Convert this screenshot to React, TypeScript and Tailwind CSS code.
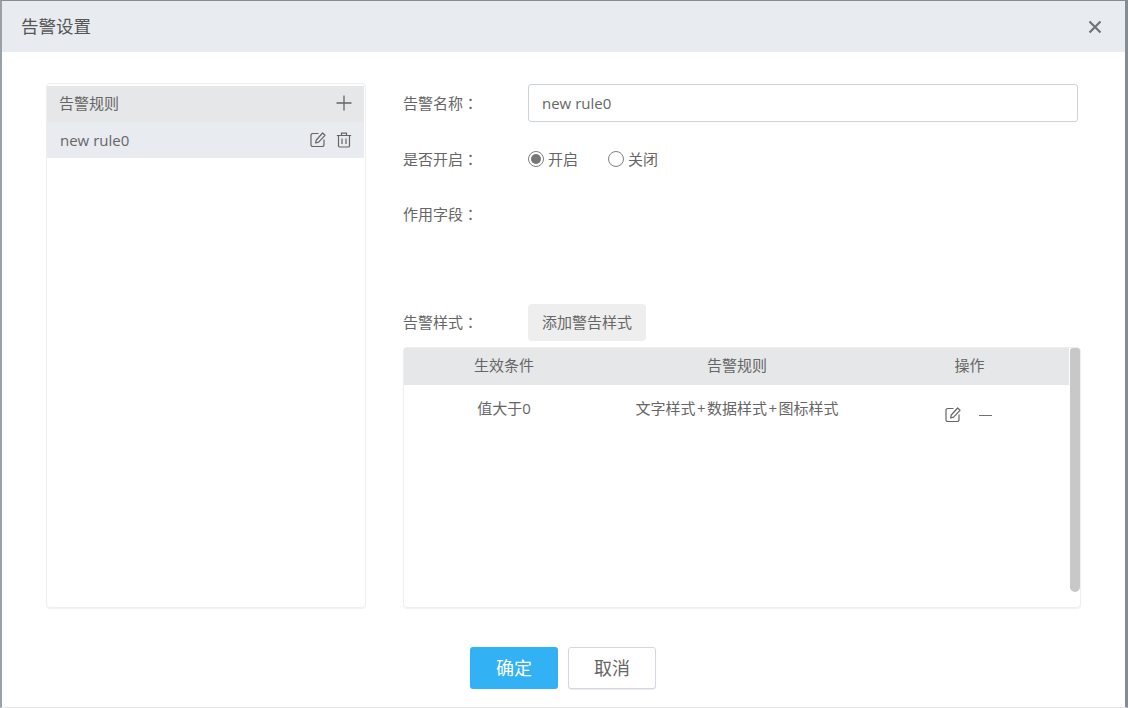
import React from "react";

const FONT = "[font-family:'Open_Sans','Noto_Sans_CJK_SC',sans-serif]";

const EditIcon = () => (
  <svg width="16" height="16" viewBox="0 0 16 16" fill="none" stroke="#666" strokeWidth="1.2">
    <path d="M8.5 1.5H2.8A1.8 1.8 0 0 0 1 3.3v9.4a1.8 1.8 0 0 0 1.8 1.8h9.4a1.8 1.8 0 0 0 1.8-1.8V7.5" />
    <path d="M12.6 1 15 3.3 8.6 10.2l-3 .8.7-3z" strokeLinejoin="round" />
  </svg>
);

const TrashIcon = () => (
  <svg width="16" height="16" viewBox="0 0 16 16" fill="none" stroke="#666" strokeWidth="1.2">
    <path d="M.8 3.5h14.4M5.5 3.3V1.2h5v2.1" />
    <path d="M2.5 3.5v10.2a1.3 1.3 0 0 0 1.3 1.3h8.4a1.3 1.3 0 0 0 1.3-1.3V3.5" />
    <path d="M6 6.5v5.5M10 6.5v5.5" />
  </svg>
);

// full-width colon sits centred in the cell in the TC face
const Label = ({ text }: { text: string }) => (
  <span className="w-[125px]">
    {text}
    <span className="[font-family:'Noto_Sans_CJK_TC',sans-serif]">：</span>
  </span>
);

const Plus = () => <span className="mx-[1.5px]">+</span>;

export default function App() {
  return (
    <div className={`${FONT} flex h-[708px] w-[1128px] flex-col overflow-hidden border-t border-b border-l-2 border-r-[3px] border-t-[#868c94] border-b-[#e4e4e4] border-l-[#9aa0a8] border-r-[#868c94] bg-white text-[15px] text-[#666]`}>
      <div className="flex h-[51px] shrink-0 items-center justify-between bg-[#e8ebf0] pl-[19px] pr-[23px]">
        <span className="text-[17.5px] text-[#555]">告警设置</span>
        <svg width="14" height="14" viewBox="0 0 14 14" stroke="#6e7378" strokeWidth="2.2">
          <path d="M1.5 1.5l11 11M12.5 1.5l-11 11" />
        </svg>
      </div>

      <div className="flex flex-1 items-start pl-11 pt-[31px]">
        <div className="h-[525px] w-[320px] shrink-0 rounded-sm border border-[#eeeeee] pt-[2px] shadow-[0_1px_1px_rgba(0,0,0,0.06)]">
          <div className="mr-px flex h-9 items-center justify-between bg-[#e6e7e9] pl-3 pr-3">
            <span className="mb-px">告警规则</span>
            <svg className="mb-[2px]" width="16" height="16" viewBox="0 0 16 16" stroke="#666" strokeWidth="1.3">
              <path d="M8 .5v15M.5 8h15" />
            </svg>
          </div>
          <div className="mr-px flex h-9 items-center justify-between bg-[#e8ebf0] pl-[13px] pr-3">
            <span className="mt-px">new rule0</span>
            <div className="flex items-center gap-[10px]">
              <EditIcon />
              <TrashIcon />
            </div>
          </div>
        </div>

        <div className="ml-[37px] mt-px w-[678px]">
          <div className="flex h-[38px] items-center">
            <Label text="告警名称" />
            <div className="flex h-[38px] w-[550px] items-center rounded-[3px] border border-[#ccd3dd] pl-[13px]">
              new rule0
            </div>
          </div>

          <div className="mt-[27px] flex h-5 items-center">
            <Label text="是否开启" />
            <span className="flex h-4 w-4 items-center justify-center rounded-full border border-[#808080]">
              <span className="h-[10px] w-[10px] rounded-full bg-[#777]" />
            </span>
            <span className="ml-1">开启</span>
            <span className="ml-[30px] h-4 w-4 rounded-full border border-[#808080]" />
            <span className="ml-1">关闭</span>
          </div>

          <div className="mt-[35px] flex h-5 items-center">
            <Label text="作用字段" />
          </div>

          <div className="mt-20 flex h-[37px] items-center">
            <Label text="告警样式" />
            <div className="flex h-[37px] w-[118px] items-center justify-center rounded-sm bg-[#eeeeee]">添加警告样式</div>
          </div>

          <div className="relative mt-[6px] h-[261px] w-[678px] rounded-sm border border-[#eeeeee] shadow-[0_1px_1px_rgba(0,0,0,0.06)]">
            <div className="flex h-[37px] w-[665px] items-center bg-[#e6e7e9] pb-[2px] text-center">
              <span className="w-[200px]">生效条件</span>
              <span className="w-[266px]">告警规则</span>
              <span className="w-[199px]">操作</span>
            </div>
            <div className="flex w-[665px] items-start pt-[12px] text-center">
              <span className="w-[200px]">值大于0</span>
              <span className="w-[266px]">文字样式<Plus />数据样式<Plus />图标样式</span>
              <div className="flex w-[197px] items-center justify-center gap-[18px] pt-[10px]">
                <EditIcon />
                <span className="h-px w-[13px] bg-[#707070]" />
              </div>
            </div>
            <div className="absolute right-0 top-0 h-[244px] w-[10px] rounded-b-[5px] rounded-t-[3px] bg-[#c8c8c8]" />
          </div>
        </div>
      </div>

      <div className="flex justify-center gap-[10px] pb-[18px] pr-px">
        <button type="button" className="h-[42px] w-[88px] rounded-[3px] bg-[#33b1f5] text-lg text-white">确定</button>
        <button type="button" className="h-[42px] w-[88px] rounded-[3px] border border-[#d3d9e2] bg-white text-lg text-[#666] shadow-[0_1px_1px_rgba(0,0,0,0.08)]">取消</button>
      </div>
    </div>
  );
}
